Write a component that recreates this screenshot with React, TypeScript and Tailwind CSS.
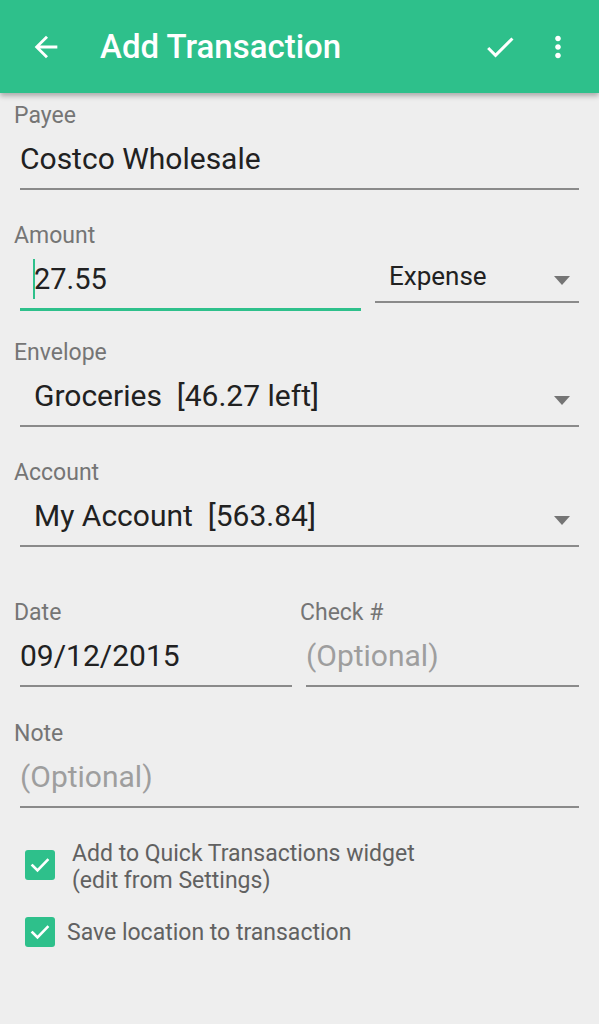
import React from "react";

const GREEN = "#2ec08b";

function Caret() {
  return (
    <svg width="16" height="9" viewBox="0 0 16 9" className="shrink-0">
      <path d="M0 0 L16 0 L8 9 Z" fill="#757575" />
    </svg>
  );
}

function Label({ children }: { children: React.ReactNode }) {
  return <div className="h-[24px] text-[23px] leading-[24px] text-[#757575]">{children}</div>;
}

function Line() {
  return <div className="h-[2px] mt-[13px] bg-[#8a8a8a]" />;
}

function CheckBox() {
  return (
    <div className="w-[30px] h-[30px] rounded-[3px] flex items-center justify-center shrink-0" style={{ backgroundColor: GREEN }}>
      <svg width="24" height="24" viewBox="0 0 24 24">
        <path d="M4.5 12.5 L9.5 17.5 L19.5 7" fill="none" stroke="#fff" strokeWidth="2.6" strokeLinecap="square" />
      </svg>
    </div>
  );
}

export default function App() {
  return (
    <div className="w-[599px] h-[1024px] bg-[#eeeeee] overflow-hidden" style={{ fontFamily: "Roboto, 'Noto Sans', sans-serif" }}>
      <div className="h-[93px] flex items-center relative z-10 shadow-[0_3px_5px_rgba(0,0,0,0.28)]" style={{ backgroundColor: GREEN }}>
        <svg width="34" height="34" viewBox="0 0 24 24" className="ml-[29px]">
          <path d="M20 11H7.83l5.59-5.59L12 4l-8 8 8 8 1.41-1.41L7.83 13H20v-2z" fill="#fff" />
        </svg>
        <div className="ml-[37px] text-white text-[33px] font-medium leading-none">Add Transaction</div>
        <div className="flex-1" />
        <svg width="36" height="36" viewBox="0 0 24 24" className="mr-[23px]">
          <path d="M9 16.17L4.83 12l-1.42 1.41L9 19 21 7l-1.41-1.41z" fill="#fff" />
        </svg>
        <svg width="34" height="34" viewBox="0 0 24 24" className="mr-[24px]">
          <path d="M12 8c1.1 0 2-.9 2-2s-.9-2-2-2-2 .9-2 2 .9 2 2 2zm0 2c-1.1 0-2 .9-2 2s.9 2 2 2 2-.9 2-2-.9-2-2-2zm0 6c-1.1 0-2 .9-2 2s.9 2 2 2 2-.9 2-2-.9-2-2-2z" fill="#fff" />
        </svg>
      </div>

      <div className="pl-[14px] pr-[20px] pt-[11px]">
        {/* Payee */}
        <div>
          <Label>Payee</Label>
          <div className="ml-[6px] mt-[15px] h-[32px] text-[30px] leading-[32px] text-[#212121]">Costco Wholesale</div>
          <div className="ml-[6px]"><Line /></div>
        </div>

        {/* Amount */}
        <div className="mt-[34px]">
          <Label>Amount</Label>
          <div className="flex ml-[6px] gap-[14px]">
            <div className="w-[341px]">
              <div className="mt-[15px] h-[32px] flex items-center">
                <div className="w-[2px] h-[40px] ml-[13px]" style={{ backgroundColor: GREEN }} />
                <div className="text-[29px] leading-[32px] text-[#212121] -ml-[1px]">27.55</div>
              </div>
              <div className="h-[3px] mt-[13px]" style={{ backgroundColor: GREEN }} />
            </div>
            <div className="flex-1">
              <div className="mt-[13px] h-[30px] flex items-center pl-[14px] pr-[9px]">
                <div className="flex-1 text-[26px] leading-[30px] text-[#212121]">Expense</div>
                <div className="mt-[8px]"><Caret /></div>
              </div>
              <div className="h-[2px] mt-[10px] bg-[#8a8a8a]" />
            </div>
          </div>
        </div>

        {/* Envelope */}
        <div className="mt-[30px]">
          <Label>Envelope</Label>
          <div className="ml-[6px] mt-[15px] h-[32px] flex items-center pl-[14px] pr-[9px]">
            <div className="flex-1 text-[30px] leading-[32px] text-[#212121] whitespace-pre">Groceries  [46.27 left]</div>
            <div className="mt-[8px]"><Caret /></div>
          </div>
          <div className="ml-[6px]"><Line /></div>
        </div>

        {/* Account */}
        <div className="mt-[34px]">
          <Label>Account</Label>
          <div className="ml-[6px] mt-[15px] h-[32px] flex items-center pl-[14px] pr-[9px]">
            <div className="flex-1 text-[30px] leading-[32px] text-[#212121] whitespace-pre">My Account  [563.84]</div>
            <div className="mt-[8px]"><Caret /></div>
          </div>
          <div className="ml-[6px]"><Line /></div>
        </div>

        {/* Date / Check */}
        <div className="mt-[54px] flex">
          <div className="w-[286px]">
            <Label>Date</Label>
            <div className="ml-[6px] mt-[15px] h-[32px] text-[30px] leading-[32px] text-[#212121]">09/12/2015</div>
            <div className="ml-[6px] mr-[8px]"><Line /></div>
          </div>
          <div className="flex-1">
            <Label>Check #</Label>
            <div className="ml-[6px] mt-[15px] h-[32px] text-[30px] leading-[32px] text-[#9e9e9e]">(Optional)</div>
            <div className="ml-[6px]"><Line /></div>
          </div>
        </div>

        {/* Note */}
        <div className="mt-[35px]">
          <Label>Note</Label>
          <div className="ml-[6px] mt-[15px] h-[32px] text-[30px] leading-[32px] text-[#9e9e9e]">(Optional)</div>
          <div className="ml-[6px]"><Line /></div>
        </div>

        {/* Checkboxes */}
        <div className="mt-[32px] ml-[11px] flex items-start">
          <div className="mt-[10px]"><CheckBox /></div>
          <div className="ml-[17px] text-[23px] leading-[27px] text-[#616161]">
            <div>Add to Quick Transactions widget</div>
            <div>(edit from Settings)</div>
          </div>
        </div>
        <div className="mt-[23px] ml-[11px] flex items-center">
          <CheckBox />
          <div className="ml-[12px] text-[23px] leading-[27px] text-[#616161]">Save location to transaction</div>
        </div>
      </div>
    </div>
  );
}
